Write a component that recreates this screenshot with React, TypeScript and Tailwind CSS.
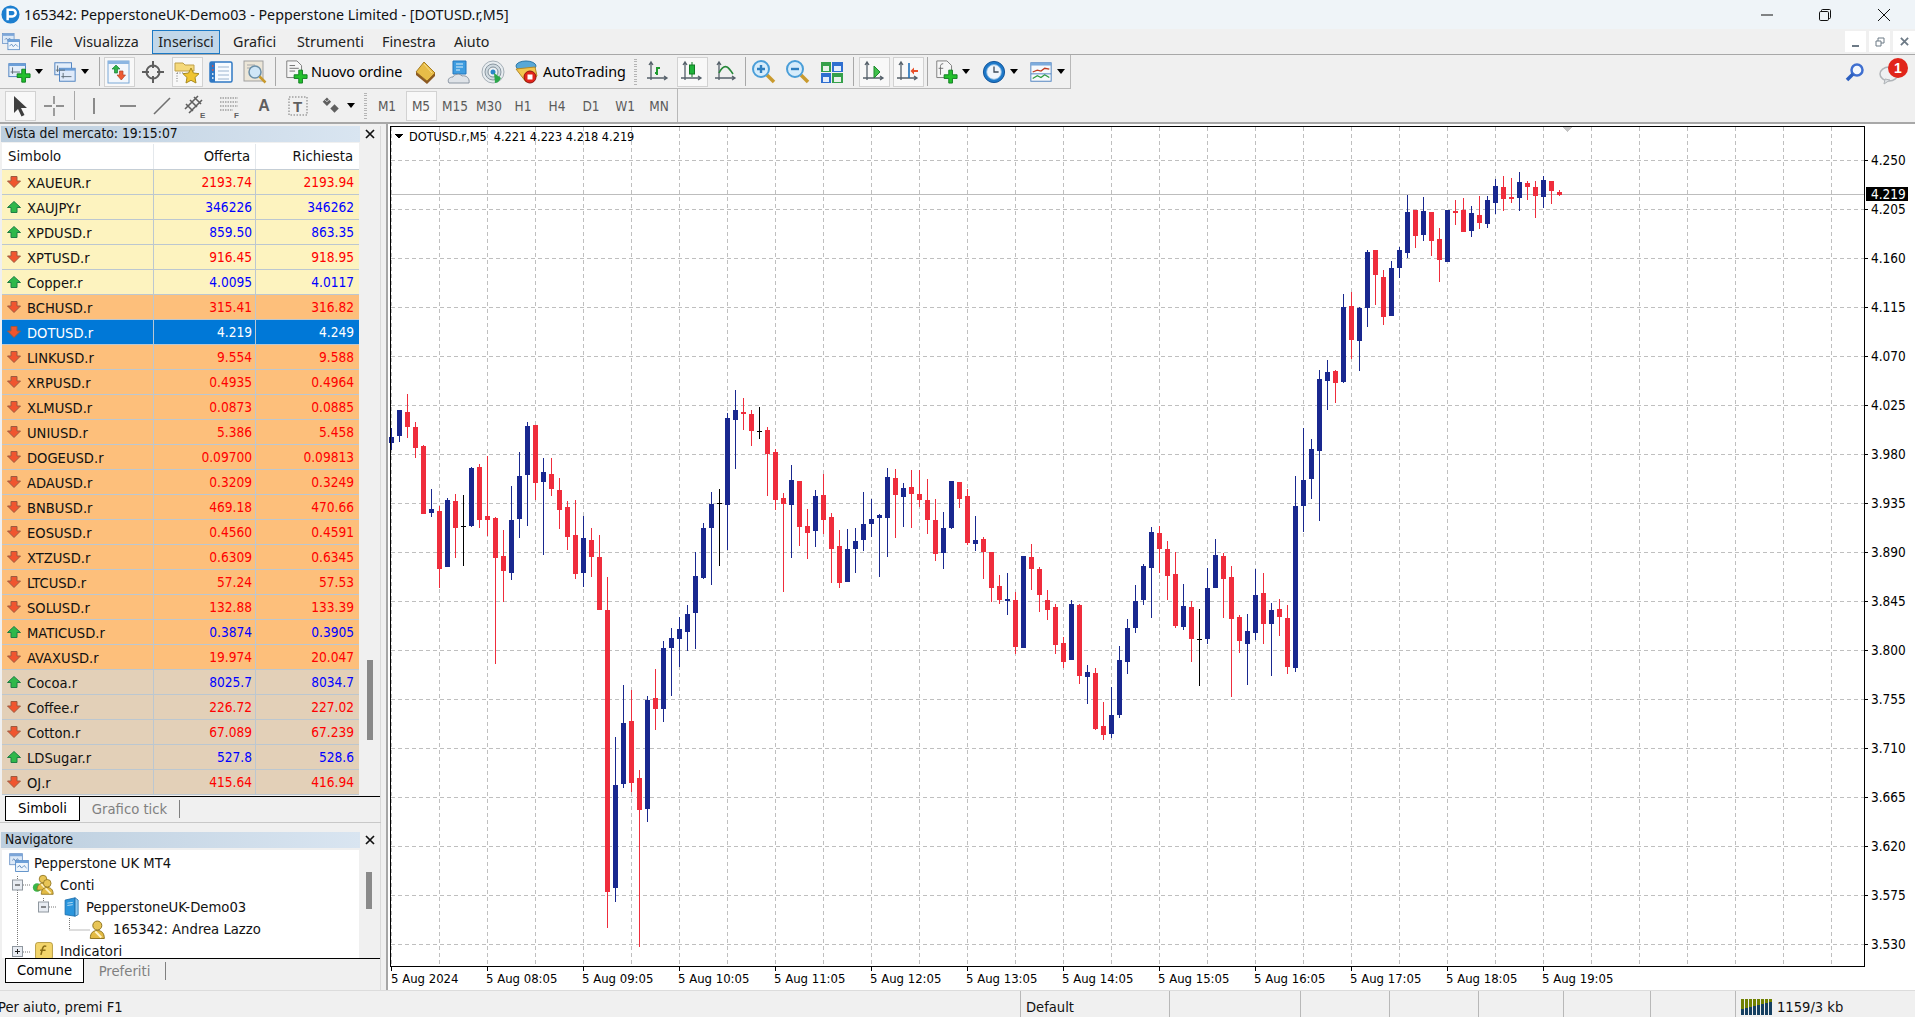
import type { ReactNode } from 'react';

const sans = "font-['DejaVu_Sans',sans-serif] [font-stretch:condensed]";
const ui = "font-['Noto_Sans',sans-serif]";

type Candle = [string, number, number, number, number];

// kind, high, body top, body bottom, low: read off the chart, scale 3, per block offset
const early: Candle[] = [
  ['b', 145, 170, 188, 210], ['b', 90, 90, 168, 186], ['r', 42, 96, 141, 174], ['r', 126, 141, 204, 234],
  ['r', 195, 198, 402, 402], ['b', 327, 387, 399, 411], ['r', 378, 393, 567, 624], ['b', 354, 360, 561, 561],
  ['r', 342, 363, 444, 534], ['k', 345, 439, 440, 558], ['b', 262, 264, 438, 441], ['r', 252, 261, 420, 444],
  ['r', 228, 408, 420, 468], ['r', 411, 414, 534, 852], ['r', 450, 528, 573, 666], ['b', 318, 420, 579, 600],
  ['b', 216, 288, 417, 474], ['b', 126, 138, 285, 438], ['r', 135, 135, 309, 360], ['b', 234, 276, 306, 525],
  ['r', 234, 282, 327, 348], ['r', 294, 330, 390, 447], ['r', 363, 381, 471, 510], ['r', 360, 465, 582, 597],
  ['b', 408, 474, 579, 621], ['r', 444, 480, 531, 591], ['r', 465, 531, 690, 690], ['r', 591, 690, 1536, 1644],
  ['b', 1071, 1215, 1524, 1566], ['b', 915, 1029, 1212, 1224], ['r', 930, 1023, 1209, 1236], ['r', 1170, 1194, 1290, 1700],
  ['b', 948, 960, 1287, 1326], ['r', 867, 954, 987, 1050], ['b', 783, 804, 987, 1026], ['b', 744, 774, 804, 948],
  ['b', 711, 747, 777, 861], ['b', 675, 702, 756, 813], ['b', 516, 588, 699, 807], ['b', 429, 444, 594, 597],
  ['b', 336, 372, 444, 615], ['k', 327, 370, 371, 558], ['b', 99, 114, 375, 510], ['b', 30, 90, 120, 267],
  ['r', 54, 96, 102, 150], ['r', 90, 102, 153, 198], ['k', 81, 154, 155, 177], ['r', 141, 150, 222, 348],
  ['r', 207, 216, 360, 390], ['r', 339, 354, 372, 636], ['b', 255, 300, 375, 534], ['r', 303, 303, 441, 498],
  ['r', 387, 438, 459, 537], ['b', 330, 348, 453, 501], ['r', 282, 345, 420, 462], ['r', 399, 411, 507, 609],
  ['r', 450, 498, 609, 624], ['b', 447, 507, 606, 606], ['b', 444, 483, 507, 579], ['b', 336, 432, 480, 513],
  ['b', 357, 417, 432, 471], ['b', 402, 405, 414, 591], ['b', 264, 291, 414, 531],
];

const middle: Candle[] = [
  ['r', 87, 114, 165, 294], ['b', 129, 144, 171, 261], ['r', 90, 141, 162, 264], ['r', 90, 162, 180, 201],
  ['r', 117, 180, 240, 282], ['r', 177, 240, 342, 363], ['b', 216, 264, 339, 387], ['b', 123, 123, 264, 267],
  ['r', 126, 126, 177, 204], ['r', 147, 168, 309, 315], ['b', 228, 300, 312, 333], ['r', 291, 297, 336, 417],
  ['r', 336, 336, 444, 486], ['r', 405, 438, 480, 492], ['b', 399, 477, 483, 525], ['r', 456, 480, 621, 642],
  ['b', 348, 348, 624, 624], ['r', 312, 351, 387, 450], ['r', 381, 387, 465, 516], ['r', 450, 480, 510, 540],
  ['r', 492, 501, 615, 642], ['r', 591, 609, 666, 684], ['b', 480, 492, 660, 660], ['r', 492, 495, 708, 732],
  ['b', 675, 696, 711, 792], ['r', 684, 699, 867, 870], ['r', 786, 858, 885, 900], ['b', 741, 825, 882, 894],
  ['b', 618, 660, 825, 834], ['b', 537, 564, 666, 702], ['b', 435, 483, 564, 579], ['b', 372, 378, 480, 495],
  ['b', 261, 276, 384, 534], ['r', 258, 279, 327, 399], ['r', 303, 327, 408, 480], ['r', 336, 402, 558, 564],
  ['b', 432, 498, 561, 570], ['r', 483, 501, 597, 666], ['k', 507, 597, 598, 738], ['b', 384, 444, 597, 612],
  ['b', 297, 345, 444, 444], ['r', 339, 348, 417, 534], ['r', 378, 411, 537, 771], ['r', 525, 531, 603, 639],
  ['b', 522, 573, 612, 735], ['b', 387, 465, 579, 600], ['r', 399, 459, 552, 612], ['b', 489, 510, 552, 708],
  ['r', 477, 507, 531, 588], ['r', 495, 534, 681, 702],
];

const late: Candle[] = [
  ['b', 948, 1038, 1524, 1536], ['b', 804, 960, 1038, 1116], ['b', 837, 867, 957, 1017], ['b', 630, 657, 873, 1083],
  ['b', 600, 636, 663, 750], ['r', 630, 633, 669, 729], ['b', 402, 441, 666, 669], ['r', 396, 438, 540, 597],
  ['b', 441, 444, 543, 633], ['b', 270, 276, 444, 501], ['r', 270, 270, 345, 435], ['r', 330, 351, 471, 495],
  ['b', 303, 324, 468, 468], ['b', 261, 270, 324, 354], ['b', 105, 156, 279, 294], ['r', 150, 150, 228, 264],
  ['b', 111, 153, 225, 243], ['r', 156, 156, 243, 288], ['r', 204, 237, 300, 366], ['b', 150, 150, 306, 306],
  ['r', 120, 153, 159, 195], ['r', 114, 150, 216, 216], ['b', 138, 159, 213, 231], ['r', 108, 165, 189, 207],
  ['b', 108, 120, 192, 204], ['b', 57, 78, 129, 162], ['r', 48, 81, 117, 153], ['r', 54, 111, 117, 129],
  ['b', 36, 66, 114, 153], ['r', 63, 69, 81, 120], ['r', 63, 81, 108, 174], ['b', 48, 60, 111, 144],
  ['r', 63, 63, 93, 132], ['r', 90, 96, 105, 108],
];

const candles = [
  ...early.map((c) => ({ c, off: 380 })),
  ...middle.map((c) => ({ c, off: 440 })),
  ...late.map((c) => ({ c, off: 160 })),
];

const candleColor: Record<string, string> = { b: '#19288f', r: '#ef2d3c', k: '#000000' };

type Quote = { symbol: string; bid: string; ask: string; up?: boolean; tone: 'y' | 'o' | 't'; selected?: boolean };

const quotes: Quote[] = [
  { symbol: 'XAUEUR.r', bid: '2193.74', ask: '2193.94', tone: 'y' },
  { symbol: 'XAUJPY.r', bid: '346226', ask: '346262', up: true, tone: 'y' },
  { symbol: 'XPDUSD.r', bid: '859.50', ask: '863.35', up: true, tone: 'y' },
  { symbol: 'XPTUSD.r', bid: '916.45', ask: '918.95', tone: 'y' },
  { symbol: 'Copper.r', bid: '4.0095', ask: '4.0117', up: true, tone: 'y' },
  { symbol: 'BCHUSD.r', bid: '315.41', ask: '316.82', tone: 'o' },
  { symbol: 'DOTUSD.r', bid: '4.219', ask: '4.249', tone: 'o', selected: true },
  { symbol: 'LINKUSD.r', bid: '9.554', ask: '9.588', tone: 'o' },
  { symbol: 'XRPUSD.r', bid: '0.4935', ask: '0.4964', tone: 'o' },
  { symbol: 'XLMUSD.r', bid: '0.0873', ask: '0.0885', tone: 'o' },
  { symbol: 'UNIUSD.r', bid: '5.386', ask: '5.458', tone: 'o' },
  { symbol: 'DOGEUSD.r', bid: '0.09700', ask: '0.09813', tone: 'o' },
  { symbol: 'ADAUSD.r', bid: '0.3209', ask: '0.3249', tone: 'o' },
  { symbol: 'BNBUSD.r', bid: '469.18', ask: '470.66', tone: 'o' },
  { symbol: 'EOSUSD.r', bid: '0.4560', ask: '0.4591', tone: 'o' },
  { symbol: 'XTZUSD.r', bid: '0.6309', ask: '0.6345', tone: 'o' },
  { symbol: 'LTCUSD.r', bid: '57.24', ask: '57.53', tone: 'o' },
  { symbol: 'SOLUSD.r', bid: '132.88', ask: '133.39', tone: 'o' },
  { symbol: 'MATICUSD.r', bid: '0.3874', ask: '0.3905', up: true, tone: 'o' },
  { symbol: 'AVAXUSD.r', bid: '19.974', ask: '20.047', tone: 'o' },
  { symbol: 'Cocoa.r', bid: '8025.7', ask: '8034.7', up: true, tone: 't' },
  { symbol: 'Coffee.r', bid: '226.72', ask: '227.02', tone: 't' },
  { symbol: 'Cotton.r', bid: '67.089', ask: '67.239', tone: 't' },
  { symbol: 'LDSugar.r', bid: '527.8', ask: '528.6', up: true, tone: 't' },
  { symbol: 'OJ.r', bid: '415.64', ask: '416.94', tone: 't' },
];

const toneClass = { y: 'bg-[#fdf3bf]', o: 'bg-[#fdbf7b]', t: 'bg-[#e3d0b8]' };

function Plus({ x = 12, y = 12 }: { x?: number; y?: number }) {
  return (
    <path
      transform={`translate(${x} ${y})`}
      d="M5 0h4v5h5v4H9v5H5V9H0V5h5z"
      fill="#23c02c"
      stroke="#0d7d1e"
      strokeWidth="1"
    />
  );
}

function Svg({ children, className = 'h-[26px] w-[26px]' }: { children: ReactNode; className?: string }) {
  return (
    <svg viewBox="0 0 26 26" className={className} fill="none">
      {children}
    </svg>
  );
}

function Axes() {
  return (
    <path d="M6 3v18M2 19h19M4 6l2-3 2 3M19 17l3 2-3 2" stroke="#55606a" strokeWidth="1.3" />
  );
}

function TerminalIcon({ className }: { className?: string }) {
  return (
    <Svg className={className}>
      <rect x="2" y="2" width="15" height="13" fill="#dce9f7" stroke="#6b93c6" />
      <rect x="2" y="2" width="15" height="3" fill="#7da6d8" />
      <path d="M5 10l2-2 2 3 2-3 2 2" stroke="#5a7fae" />
      <rect x="9" y="10" width="15" height="13" fill="#eef5fc" stroke="#4d84c2" />
      <rect x="9" y="10" width="15" height="3" fill="#6ea0d8" />
      <path d="M11 18l3-2 2 3 3-3 3 3" stroke="#4d7fb8" />
    </Svg>
  );
}

function UpDownIcon({ up }: { up?: boolean }) {
  return (
    <svg viewBox="0 0 14 12" className="h-[12px] w-[14px] shrink-0">
      {up ? (
        <path d="M7 .5l6.500 6H10v5H4v-5H.5z" fill="#2fb84a" stroke="#1f7d45" strokeWidth="1" />
      ) : (
        <path d="M4 .5h6V5h3.500L7 11.500 .5 5H4z" fill="#f0552f" stroke="#9c5a40" strokeWidth="1" />
      )}
    </svg>
  );
}

function Btn({ children, pressed, className = 'w-[34px]' }: { children: ReactNode; pressed?: boolean; className?: string }) {
  return (
    <div className={`flex h-full shrink-0 items-center justify-center py-[1px] ${className}`}>
      <div
        className={`flex h-[30px] w-[31px] items-center justify-center ${
          pressed ? 'border border-[#d2d2d2] bg-[#f8f8f8]' : ''
        }`}
      >
        {children}
      </div>
    </div>
  );
}

function DropBtn({ children, className }: { children: ReactNode; className: string }) {
  return (
    <div className={`flex h-full shrink-0 items-center ${className}`}>
      {children}
      <span className="ml-[4px] h-0 w-0 border-x-[4px] border-t-[5px] border-x-transparent border-t-black" />
    </div>
  );
}

function Sep({ className = 'w-[6px]' }: { className?: string }) {
  return (
    <div className={`flex h-full shrink-0 justify-center py-[2px] ${className}`}>
      <div className="h-full w-px bg-[#a8a8a8]" />
    </div>
  );
}

function Grip() {
  return (
    <div className="flex h-full w-[10px] shrink-0 flex-col justify-evenly py-[2px] pl-[3px]">
      {Array.from({ length: 11 }).map((_, i) => (
        <span key={i} className="h-px w-[3px] bg-[#b5b5b5]" />
      ))}
    </div>
  );
}

function TopToolbar() {
  return (
    <div className="flex h-[34px] w-[1071px] items-center border-r border-b border-[#b8b8b8] pl-[4px]">
      <DropBtn className="w-[45px] pl-[3px]">
        <Svg className="h-[24px] w-[24px]">
          <rect x="2" y="4" width="18" height="14" fill="#e4eefa" stroke="#4a7fbf" />
          <rect x="2" y="4" width="18" height="2.5" fill="#6c9fd8" />
          <path d="M6 8v7M4 13h10" stroke="#5d6a75" />
          <Plus x={11} y={10} />
        </Svg>
      </DropBtn>
      <DropBtn className="w-[47px] pl-[4px]">
        <Svg className="h-[24px] w-[24px]">
          <rect x="2" y="3" width="18" height="13" fill="#e4eefa" stroke="#4a7fbf" />
          <rect x="7" y="9" width="17" height="14" fill="#dfeafa" stroke="#4a7fbf" />
          <rect x="7" y="9" width="17" height="2.5" fill="#6c9fd8" />
          <path d="M5 6v7M3 11h10M11 14v6M9 18h11" stroke="#5d6a75" />
        </Svg>
      </DropBtn>
      <Sep />
      <Btn pressed>
        <Svg>
          <rect x="2" y="2" width="21" height="22" fill="#f3f7fc" stroke="#7ba8d6" />
          <rect x="2" y="2" width="21" height="3" fill="#8cb6e2" />
          <path d="M10 6l4 4h-2.5v4h-3v-4H6z" fill="#2fb548" stroke="#1c7d3b" strokeWidth=".7" />
          <path d="M13.5 12h3.5v4h2.5l-4.2 5-4.3-5h2.5z" fill="#ef5a33" stroke="#b2442a" strokeWidth=".7" />
        </Svg>
      </Btn>
      <Btn>
        <Svg>
          <circle cx="13" cy="13" r="6.5" stroke="#5e5e5e" strokeWidth="2" />
          <path d="M13 2v7M13 17v7M2 13h7M17 13h7" stroke="#5e5e5e" strokeWidth="2" />
        </Svg>
      </Btn>
      <Btn pressed>
        <Svg>
          <path d="M1 4h8l2 2h9v6H1z" fill="#f5d97b" stroke="#bfa04a" />
          <path d="M3 14v9M3 14h6" stroke="#777" strokeDasharray="1 1.5" />
          <path d="M17 9l2.4 5 5.6.7-4 3.8 1 5.5-5-2.7-5 2.7 1-5.5-4-3.8 5.6-.7z" fill="#f0c430" stroke="#a88a20" />
        </Svg>
      </Btn>
      <Btn>
        <Svg>
          <rect x="2" y="3" width="22" height="20" rx="1.5" fill="#f7fbff" stroke="#2f78c4" strokeWidth="1.5" />
          <rect x="2" y="3" width="5" height="20" fill="#2f78c4" />
          <path d="M10 8h11M10 12h11M10 16h11M10 20h11" stroke="#9bb4cf" />
          <path d="M4 7h1.5M4 11h1.5" stroke="#ef4a36" strokeWidth="1.5" />
          <path d="M4 15h1.5M4 19h1.5" stroke="#ffffff" strokeWidth="1.5" />
        </Svg>
      </Btn>
      <Btn>
        <Svg>
          <rect x="2" y="2" width="19" height="20" fill="#ece6d8" stroke="#9f9f9f" />
          <path d="M5 6h8M5 9h5" stroke="#a9a9a9" />
          <circle cx="13" cy="13" r="6" fill="#cfe6f7" stroke="#6a8fa8" strokeWidth="1.5" />
          <path d="M17.5 17.5l6 6" stroke="#c99a2e" strokeWidth="2.5" />
        </Svg>
      </Btn>
      <Sep />
      <div className="flex h-full w-[130px] shrink-0 items-center pl-[6px]">
        <Svg className="h-[24px] w-[24px]">
          <path d="M3 1h11l5 5v13H3z" fill="#f6f6f6" stroke="#7a7a7a" />
          <path d="M6 6h6M6 9h10M6 12h6" stroke="#6b6b6b" />
          <Plus x={11} y={11} />
        </Svg>
        <span className={`${ui} ml-[3px] text-[14.3px] text-black`}>Nuovo ordine</span>
      </div>
      <Btn>
        <Svg>
          <path d="M12 3l11 11-8 8L4 13z" fill="#e7bc48" stroke="#a67c1f" />
          <path d="M4 13v3l11 9 8-8v-3l-8 8z" fill="#8c5a22" />
          <path d="M12 5l8 9" stroke="#f7dc85" />
        </Svg>
      </Btn>
      <Btn>
        <Svg>
          <path d="M7 2h13v13H7z" fill="#3f9de0" stroke="#2476bd" />
          <path d="M10 5h7M10 8h7M10 11h4" stroke="#dff0fb" />
          <path d="M3 24c-2-3 0-6 4-6 1-3 7-4 9-1 4-1 8 2 7 7z" fill="#dfe3e8" stroke="#8b96a3" />
        </Svg>
      </Btn>
      <Btn>
        <Svg>
          <circle cx="13" cy="13" r="11" fill="#e8edf0" stroke="#a4aeb6" />
          <circle cx="13" cy="13" r="8" fill="#d0dae0" stroke="#8a97a1" />
          <circle cx="13" cy="13" r="5" fill="#eef2f4" stroke="#7f8e99" />
          <circle cx="13" cy="13" r="2.5" fill="#2a86c8" />
          <path d="M14 14l1 10c3 0 5-3 6-5z" fill="#2ca84a" />
        </Svg>
      </Btn>
      <div className="flex h-full w-[121px] shrink-0 items-center pl-[3px]">
        <Svg>
          <ellipse cx="13" cy="7" rx="10" ry="5" fill="#58a8d6" stroke="#2d78a8" />
          <path d="M3 10l10 13 11-6-2-9z" fill="#f2c64e" stroke="#b48a28" />
          <circle cx="17" cy="18" r="6" fill="#e2231a" stroke="#8d1510" />
          <rect x="14.5" y="15.5" width="5" height="5" fill="#ffffff" />
        </Svg>
        <span className={`${ui} ml-[4px] text-[14.3px] text-black`}>AutoTrading</span>
      </div>
      <Grip />
      <Btn>
        <Svg>
          <Axes />
          <path d="M12 8v8M12 14h-2M12 9h3" stroke="#1f9a2e" strokeWidth="2" />
        </Svg>
      </Btn>
      <Btn pressed>
        <Svg>
          <Axes />
          <path d="M13 3v15" stroke="#127a25" />
          <rect x="10.5" y="6" width="5" height="9" fill="#1fb33a" stroke="#127a25" />
        </Svg>
      </Btn>
      <Btn>
        <Svg>
          <Axes />
          <path d="M6 14c3-6 6-7 8-6s4 4 6 7" stroke="#27883a" strokeWidth="1.6" />
        </Svg>
      </Btn>
      <Sep className="w-[4px]" />
      <Btn>
        <Zoomer sign="+" />
      </Btn>
      <Btn>
        <Zoomer sign="-" />
      </Btn>
      <Btn>
        <Svg>
          <rect x="2" y="3" width="10" height="10" fill="#35a04a" />
          <rect x="13" y="3" width="11" height="10" fill="#2f6fd0" />
          <rect x="2" y="14" width="10" height="10" fill="#2f6fd0" />
          <rect x="13" y="14" width="11" height="10" fill="#35a04a" />
          <rect x="4" y="7" width="6" height="5" fill="#e8f2ea" />
          <rect x="15" y="7" width="7" height="5" fill="#e4edfb" />
          <rect x="4" y="18" width="6" height="5" fill="#e4edfb" />
          <rect x="15" y="18" width="7" height="5" fill="#e8f2ea" />
        </Svg>
      </Btn>
      <Sep className="w-[8px]" />
      <Btn pressed>
        <Svg>
          <Axes />
          <path d="M13 7l6 6-6 6z" fill="#3fc04a" stroke="#1f8a2e" />
        </Svg>
      </Btn>
      <Btn pressed>
        <Svg>
          <Axes />
          <path d="M14 4v15" stroke="#1d6fb8" strokeWidth="1.6" />
          <path d="M23 11h-4v-2.5L15.5 12l3.5 3.5V13h4z" fill="#e8502a" />
        </Svg>
      </Btn>
      <Sep className="w-[4px]" />
      <DropBtn className="w-[47px] pl-[5px]">
        <Svg className="h-[24px] w-[24px]">
          <path d="M3 1h11l5 5v13H3z" fill="#f6f6f6" stroke="#7a7a7a" />
          <path d="M10 4c-2 0-3 1-3 3v9M5 9h5" stroke="#6b6b6b" />
          <Plus x={11} y={11} />
        </Svg>
      </DropBtn>
      <DropBtn className="w-[47px] pl-[6px]">
        <Svg className="h-[24px] w-[24px]">
          <circle cx="13" cy="13" r="11.5" fill="#1d78c8" stroke="#0d4f96" />
          <circle cx="13" cy="13" r="8" fill="#eff5fb" stroke="#7cb2e0" />
          <path d="M13 7v6h5" stroke="#3d4a58" strokeWidth="1.4" />
        </Svg>
      </DropBtn>
      <DropBtn className="w-[46px] pl-[6px]">
        <Svg className="h-[24px] w-[24px]">
          <rect x="2" y="3" width="22" height="20" fill="#f6f9fc" stroke="#4a7fbf" />
          <rect x="2" y="3" width="22" height="3" fill="#7cabdc" />
          <path d="M4 13l5-2 4 1 4-3 5 1" stroke="#c0391f" strokeWidth="1.4" />
          <path d="M4 20l5-3 4 2 4-3 5 3" stroke="#2d9c3f" strokeWidth="1.4" />
          <path d="M2 15h22" stroke="#4a7fbf" />
        </Svg>
      </DropBtn>
    </div>
  );
}

function Zoomer({ sign }: { sign: '+' | '-' }) {
  return (
    <Svg>
      <path d="M16 16l7 7" stroke="#c99a2e" strokeWidth="3.5" />
      <circle cx="10" cy="10" r="8" fill="#d6ecfb" stroke="#4a9ed8" strokeWidth="2" />
      <path d={sign === '+' ? 'M6 10h8M10 6v8' : 'M6 10h8'} stroke="#2f7fbf" strokeWidth="2.4" />
    </Svg>
  );
}

function TextGlyph({ children }: { children: string }) {
  return <span className={`${sans} pt-[2px] text-[13.5px] text-[#5a5a5a]`}>{children}</span>;
}

function SecondToolbar() {
  return (
    <div className="flex h-[33px] w-[678px] items-center border-r border-[#b8b8b8] pl-[3px]">
      <Btn pressed>
        <Svg>
          <path d="M7 3l13 12h-6l3.5 7-3 1.5L11 16l-4 4z" fill="#3f3f3f" />
        </Svg>
      </Btn>
      <Btn>
        <Svg>
          <path d="M13 3v8M13 15v8M3 13h8M15 13h8" stroke="#707070" strokeWidth="1.3" />
        </Svg>
      </Btn>
      <Sep className="w-[6px]" />
      <Btn>
        <Svg>
          <path d="M13 5v16" stroke="#707070" strokeWidth="1.6" />
        </Svg>
      </Btn>
      <Btn>
        <Svg>
          <path d="M5 13h16" stroke="#707070" strokeWidth="1.6" />
        </Svg>
      </Btn>
      <Btn>
        <Svg>
          <path d="M5 21L21 5" stroke="#707070" strokeWidth="1.6" />
        </Svg>
      </Btn>
      <Btn>
        <Svg>
          <path d="M2 16L15 3M6 20L19 7M3 11l7 7M7 7l7 7M11 4l7 7" stroke="#5f5f5f" strokeWidth="1.6" />
          <text x="17" y="25" fontSize="8" fontWeight="700" fill="#5f5f5f" fontFamily="Liberation Sans">E</text>
        </Svg>
      </Btn>
      <Btn>
        <Svg>
          <path d="M3 5h18M3 9h18M3 13h18M3 17h13" stroke="#777" strokeDasharray="1.5 1" />
          <text x="17" y="25" fontSize="8" fontWeight="700" fill="#5f5f5f" fontFamily="Liberation Sans">F</text>
        </Svg>
      </Btn>
      <Btn>
        <span className="font-['Liberation_Sans',sans-serif] text-[16px] font-bold text-[#5f5f5f]">A</span>
      </Btn>
      <Btn>
        <Svg>
          <rect x="4" y="4" width="18" height="18" stroke="#777" strokeDasharray="1.5 1.5" />
          <text x="8" y="19" fontSize="15" fontWeight="700" fill="#5f5f5f" fontFamily="Liberation Sans">T</text>
        </Svg>
      </Btn>
      <DropBtn className="w-[46px] pl-[6px]">
        <Svg className="h-[22px] w-[22px]">
          <path d="M7 3l5 5-5 5-5-5z" fill="#5f5f5f" />
          <path d="M16 11l5 5-5 5-5-5z" fill="#5f5f5f" />
          <path d="M5 6l2 2 4-4" stroke="#eee" />
        </Svg>
      </DropBtn>
      <Grip />
      <div className="-ml-[1px] flex h-full items-center">
        {['M1', 'M5', 'M15', 'M30', 'H1', 'H4', 'D1', 'W1', 'MN'].map((period) => (
          <Btn key={period} pressed={period === 'M5'}>
            <TextGlyph>{period}</TextGlyph>
          </Btn>
        ))}
      </div>
    </div>
  );
}

function CloseMark() {
  return (
    <svg viewBox="0 0 10 10" className="h-[10px] w-[10px]">
      <path d="M1 1l8 8M9 1l-8 8" stroke="#111" strokeWidth="1.7" />
    </svg>
  );
}

function PanelTitle({ title }: { title: string }) {
  return (
    <div className="flex h-[16px] items-center pl-[1px]">
      <div
        className={`${sans} flex h-full w-[361px] items-center bg-gradient-to-r from-[#bccede] to-[#d9e5f1] pl-[4px] text-[13.8px] leading-none text-[#111]`}
      >
        {title}
      </div>
      <div className="flex w-[20px] justify-center">
        <CloseMark />
      </div>
    </div>
  );
}

function Tabs({ active, other, activeWidth, otherWidth }: { active: string; other: string; activeWidth: string; otherWidth: string }) {
  return (
    <div className={`${sans} ml-[5px] flex h-[25px] w-[375px] border-t border-black text-[14.7px]`}>
      <div className={`flex h-[24px] items-center justify-center border-x border-b border-black bg-white text-black ${activeWidth}`}>
        {active}
      </div>
      <div className={`my-[3px] flex items-center justify-center border-r border-[#808080] text-[#808080] ${otherWidth}`}>
        {other}
      </div>
    </div>
  );
}

function MarketWatch() {
  return (
    <div className="flex flex-col">
      <PanelTitle title="Vista del mercato: 19:15:07" />
      <div className={`${sans} mt-px flex text-[13.6px]`}>
        <div className="ml-[2px] w-[357px]">
          <div className="grid h-[27px] grid-cols-[152px_102px_103px] border-b border-[#c5ced6] bg-white pt-[1px] text-[14.7px] text-[#111]">
            <div className="flex items-center border-r border-[#e4e8ec] pl-[6px]">Simbolo</div>
            <div className="flex items-center justify-end border-r border-[#e4e8ec] pr-[5px]">Offerta</div>
            <div className="flex items-center justify-end pr-[6px]">Richiesta</div>
          </div>
          {quotes.map((quote) => {
            const priceColor = quote.selected ? 'text-white' : quote.up ? 'text-[#0000ff]' : 'text-[#ff0000]';
            return (
              <div
                key={quote.symbol}
                className={`grid h-[25px] grid-cols-[152px_102px_103px] border-b border-[#bcc7d0] ${
                  quote.selected ? 'bg-[#0078d7]' : toneClass[quote.tone]
                }`}
              >
                <div
                  className={`flex items-center gap-[6px] border-r border-[#bcc7d0] pl-[5px] text-[14.6px] ${
                    quote.selected ? 'text-white' : 'text-[#111]'
                  }`}
                >
                  <UpDownIcon up={quote.up} />
                  <span className="pt-[1px]">{quote.symbol}</span>
                </div>
                <div className={`flex items-center justify-end border-r border-[#bcc7d0] pt-[1px] pr-[3px] ${priceColor}`}>
                  {quote.bid}
                </div>
                <div className={`flex items-center justify-end pt-[1px] pr-[5px] ${priceColor}`}>{quote.ask}</div>
              </div>
            );
          })}
        </div>
        <div className="w-[22px] pl-[8px]">
          <div className="mt-[517px] h-[80px] w-[6px] bg-[#8a8a8a]" />
        </div>
      </div>
      <div className="mt-px">
        <Tabs active="Simboli" other="Grafico tick" activeWidth="w-[75px]" otherWidth="w-[100px]" />
      </div>
    </div>
  );
}

function TreeRow({ icon, label, indent, gap }: { icon: ReactNode; label: string; indent: string; gap: string }) {
  return (
    <div className={`flex h-[22px] items-center ${indent}`}>
      <span className={gap}>{icon}</span>
      <span className="whitespace-nowrap text-[#111]">{label}</span>
    </div>
  );
}

function Person({ x, y, scale = 1 }: { x: number; y: number; scale?: number }) {
  return (
    <g transform={`translate(${x} ${y}) scale(${scale})`}>
      <circle cx="8" cy="5" r="4.5" fill="#e8c556" stroke="#8f7420" />
      <path d="M1 18c0-6 3-8 7-8s7 2 7 8z" fill="#e3bb45" stroke="#8f7420" />
      <path d="M6 11l6 6" stroke="#fff4c8" strokeWidth="2" />
    </g>
  );
}

function TreeLines() {
  return (
    <svg className="pointer-events-none absolute top-0 left-0 h-[108px] w-[120px]" viewBox="0 0 120 108" fill="none">
      <path d="M15.5 26v82M41.5 48v12M67.5 68v12H88M21 35h8M47 57h8M21 102h8" stroke="#777" strokeDasharray="1 1" />
      <rect x="10.5" y="30" width="10" height="10" fill="#e8ecf2" stroke="#8f979f" />
      <path d="M13 35h5" stroke="#222" />
      <rect x="36.5" y="52" width="10" height="10" fill="#e8ecf2" stroke="#8f979f" />
      <path d="M39 57h5" stroke="#222" />
      <rect x="10.5" y="96.500" width="10" height="10" fill="#e8ecf2" stroke="#8f979f" />
      <path d="M13 101.500h5M15.500 99v5" stroke="#222" />
    </svg>
  );
}

function Navigator() {
  return (
    <div className="mt-[9px] flex flex-col">
      <PanelTitle title="Navigatore" />
      <div className={`${sans} relative mt-[2px] flex h-[108px] overflow-hidden text-[14.7px]`}>
        <div className="relative ml-[2px] w-[358px] bg-white pt-[2px]">
          <TreeLines />
          <div className="relative">
            <TreeRow
              indent="pl-[6px]"
              gap="mr-[4px]"
              label="Pepperstone UK MT4"
              icon={<TerminalIcon className="h-[22px] w-[22px]" />}
            />
            <TreeRow
              indent="pl-[30px]"
              gap="mr-[6px]"
              label="Conti"
              icon={
                <Svg className="h-[22px] w-[22px]">
                  <circle cx="6" cy="16" r="5" fill="#3cb54a" />
                  <Person x={5} y={1} />
                  <Person x={10} y={6} />
                </Svg>
              }
            />
            <TreeRow
              indent="pl-[60px]"
              gap="mr-[4px]"
              label="PepperstoneUK-Demo03"
              icon={
                <Svg className="h-[20px] w-[20px]">
                  <path d="M4 4l13-3v24l-13-2z" fill="#2a95dc" stroke="#1a6aa8" />
                  <path d="M17 1l4 3v19l-4 2z" fill="#8cc8ef" stroke="#1a6aa8" />
                  <path d="M7 8l7-1M7 11l7-1" stroke="#d8eefb" />
                </Svg>
              }
            />
            <TreeRow
              indent="pl-[85px]"
              gap="mr-[6px]"
              label="165342: Andrea Lazzo"
              icon={
                <Svg className="h-[20px] w-[20px]">
                  <Person x={3} y={2} scale={1.3} />
                </Svg>
              }
            />
            <TreeRow
              indent="pl-[32px]"
              gap="mr-[6px]"
              label="Indicatori"
              icon={
                <Svg className="h-[20px] w-[20px]">
                  <rect x="2" y="2" width="22" height="22" rx="3" fill="#f3d56b" stroke="#a88a2a" />
                  <path d="M16 7c-3-1-4 0-5 3l-2 8M8 12h7" stroke="#8a6d16" strokeWidth="2" />
                </Svg>
              }
            />
          </div>
        </div>
        <div className="w-[21px] pl-[7px]">
          <div className="mt-[22px] h-[37px] w-[6px] bg-[#8a8a8a]" />
        </div>
      </div>
      <Tabs active="Comune" other="Preferiti" activeWidth="w-[79px]" otherWidth="w-[82px]" />
    </div>
  );
}

function LeftPanel() {
  return (
    <div className="flex h-full w-[388px] shrink-0 border-r-2 border-[#a6a6a6] pt-[2px]">
      <div className="h-full w-[381px] border-r border-[#dadada]">
        <MarketWatch />
        <div className="h-[2px] w-[381px] border-b border-[#c8c8c8]" />
        <Navigator />
      </div>
    </div>
  );
}

function Chart() {
  const priceLines = Array.from({ length: 17 }, (_, i) => ({
    y: 160 + 49 * i,
    label: (4.25 - 0.045 * i).toFixed(3),
  }));
  const gridX = Array.from({ length: 31 }, (_, i) => 391 + 48 * i);
  const timeLabels = ['5 Aug 2024', '5 Aug 08:05', '5 Aug 09:05', '5 Aug 10:05', '5 Aug 11:05', '5 Aug 12:05', '5 Aug 13:05', '5 Aug 14:05', '5 Aug 15:05', '5 Aug 16:05', '5 Aug 17:05', '5 Aug 18:05', '5 Aug 19:05'];
  const labelFont = { fontFamily: 'DejaVu Sans', fontStretch: 'condensed' };

  return (
    <div className="min-w-0 flex-1 bg-white">
      <svg viewBox="388 124 1527 866" className="block h-[866px] w-[1527px]" shapeRendering="crispEdges">
        {gridX.map((x) => (
          <path key={x} d={`M${x + 0.5} 127V966`} stroke="#bfbfbf" strokeDasharray="4 3" />
        ))}
        {priceLines.map(({ y }) => (
          <path key={y} d={`M391 ${y + 0.5}H1864`} stroke="#bfbfbf" strokeDasharray="4 3" />
        ))}
        <path d="M391 194.500H1864" stroke="#bdbdbd" />
        {candles.map(({ c: [kind, high, top, bottom, low], off }, k) => {
          const wickX = 391 + 8 * k;
          const yOf = (z: number) => off + z / 3;
          const color = candleColor[kind];
          return (
            <g key={k} fill={color}>
              <rect x={wickX} y={yOf(high)} width={1} height={Math.max(1, yOf(low) - yOf(high))} />
              <rect
                x={wickX - 2}
                y={yOf(top)}
                width={5}
                height={Math.max(1, yOf(bottom) - yOf(top))}
              />
            </g>
          );
        })}
        <path d="M1562 127h10l-5 5z" fill="#c4c4c4" />
        <path d="M390.500 126V966.500H1864.500V126.500H390.500" stroke="#000" strokeWidth="1.500" fill="none" />
        <path d="M395 134h8l-4 5z" fill="#000" />
        <text x={409} y={141} fontSize="12.600" fill="#000" style={labelFont} shapeRendering="auto">
          DOTUSD.r,M5&nbsp;&nbsp;4.221 4.223 4.218 4.219
        </text>
        {priceLines.map(({ y, label }) => (
          <g key={label}>
            <path d={`M1864 ${y + 0.5}h4`} stroke="#000" />
            <text x={1871} y={y + 5} fontSize="13.500" fill="#000" style={labelFont} shapeRendering="auto">
              {label}
            </text>
          </g>
        ))}
        <rect x={1866} y={187} width={42} height={14} fill="#000" />
        <text x={1871} y={199} fontSize="13.500" fill="#fff" style={labelFont} shapeRendering="auto">
          4.219
        </text>
        {timeLabels.map((label, i) => (
          <g key={label}>
            <path d={`M${i === 0 ? 391 : 391 + 96 * i}.5 966v5`} stroke="#000" />
            <text x={i === 0 ? 391 : 390 + 96 * i} y={983} fontSize="13" fill="#000" style={labelFont} shapeRendering="auto">
              {label}
            </text>
          </g>
        ))}
      </svg>
    </div>
  );
}

function StatusBar() {
  const cells = ['w-[149px]', 'w-[131px]', 'w-[89px]', 'w-[89px]', 'w-[85px]', 'w-[87px]', 'w-[85px]'];
  return (
    <div className={`${sans} flex h-[27px] border-t border-[#dcdcdc] bg-[#f0f0f0] text-[14.600px] text-[#111]`}>
      <div className="flex w-[1020px] shrink-0 items-center overflow-hidden">
        <span className="-ml-[2px] pt-[6px]">Per aiuto, premi F1</span>
      </div>
      {cells.map((width, i) => (
        <div key={width + i} className={`flex shrink-0 items-center border-l border-[#b8b8b8] pl-[5px] pt-[6px] ${width}`}>
          {i === 0 ? 'Default' : ''}
        </div>
      ))}
      <div className="flex flex-1 items-center gap-[5px] border-l border-[#b8b8b8] pl-[5px] pt-[6px]">
        <div className="flex h-[16px] w-[31px] items-stretch gap-px">
          {[10, 9, 8, 7, 6, 5, 4, 3].map((olive) => (
            <div key={olive} className="flex w-[3px] flex-col">
              <div className="bg-[#6f8000]" style={{ height: olive }} />
              <div className="flex-1 bg-[#164061]" />
            </div>
          ))}
        </div>
        <span>1159/3 kb</span>
      </div>
    </div>
  );
}

function TitleBar() {
  return (
    <div className="flex h-[29px] items-center bg-[#eff4f8]">
      <svg viewBox="0 0 20 20" className="ml-[1px] h-[19px] w-[19px]">
        <circle cx="10" cy="10" r="9.500" fill="#1c7fd0" />
        <path d="M7 16V5h5a3.500 3.500 0 010 7H7" stroke="#fff" strokeWidth="2.600" fill="none" />
      </svg>
      <span className={`${ui} ml-[4px] text-[14.250px] text-[#111]`}>
        165342: PepperstoneUK-Demo03 - Pepperstone Limited - [DOTUSD.r,M5]
      </span>
      <div className="ml-auto flex items-center pr-[25px]">
        <svg viewBox="0 0 12 12" className="mr-[46px] h-[12px] w-[12px]">
          <path d="M0 6h12" stroke="#111" strokeWidth="1" />
        </svg>
        <svg viewBox="0 0 12 12" className="mr-[47px] h-[12px] w-[12px]">
          <rect x=".5" y="2.500" width="9" height="9" rx="1.200" fill="none" stroke="#111" />
          <path d="M2.500 2.500V1.500a1 1 0 011-1h7a1 1 0 011 1v7a1 1 0 01-1 1h-1" fill="none" stroke="#111" />
        </svg>
        <svg viewBox="0 0 12 12" className="h-[12px] w-[12px]">
          <path d="M0 0l12 12M12 0L0 12" stroke="#111" strokeWidth="1" />
        </svg>
      </div>
    </div>
  );
}

function MenuBar() {
  const items = [
    { label: 'File', className: 'ml-[9px] w-[44px]' },
    { label: 'Visualizza', className: 'w-[78px]' },
    { label: 'Inserisci', className: 'w-[68px] bg-[#c1d7e9] border border-[#1b79c5] justify-center', },
    { label: 'Grafici', className: 'ml-[13px] w-[64px]' },
    { label: 'Strumenti', className: 'w-[85px]' },
    { label: 'Finestra', className: 'w-[72px]' },
    { label: 'Aiuto', className: 'w-[50px]' },
  ];
  return (
    <div className="flex h-[25px] items-center bg-[#f0f0f0]">
      <div className="ml-[1px] h-[20px] w-[20px]">
        <TerminalIcon className="h-[20px] w-[20px]" />
      </div>
      {items.map(({ label, className }) => (
        <div key={label} className={`${ui} flex h-[24px] items-center text-[14.300px] text-[#222] ${className}`}>
          {label}
        </div>
      ))}
      <div className="ml-auto flex gap-[3px]">
        <div className="flex h-[21px] w-[21px] items-end justify-center bg-white pb-[5px]">
          <div className="h-[2px] w-[7px] bg-[#6d7a86]" />
        </div>
        <div className="flex h-[21px] w-[21px] items-center justify-center bg-white">
          <svg viewBox="0 0 10 10" className="h-[10px] w-[10px]">
            <path d="M1 4h5v5H1zM3 4V1h6v5H6" fill="none" stroke="#6d7a86" />
          </svg>
        </div>
        <div className="flex h-[21px] w-[22px] items-center justify-center bg-white">
          <svg viewBox="0 0 10 10" className="h-[9px] w-[9px]">
            <path d="M1 1l8 8M9 1l-8 8" stroke="#6d7a86" strokeWidth="2" />
          </svg>
        </div>
      </div>
    </div>
  );
}

function ToolbarEnd() {
  return (
    <div className="ml-auto flex items-center pr-[6px]">
      <svg viewBox="0 0 20 20" className="mr-[12px] h-[20px] w-[20px]">
        <circle cx="12" cy="8" r="5.500" fill="#f4f8fd" stroke="#3f6fd0" strokeWidth="2.500" />
        <path d="M8 12l-6 6" stroke="#2c5fc0" strokeWidth="3.500" />
      </svg>
      <div className="relative h-[28px] w-[32px]">
        <svg viewBox="0 0 32 28" className="h-[28px] w-[32px]">
          <ellipse cx="12" cy="16" rx="9" ry="7" fill="#eef0f2" stroke="#b0b4b8" strokeWidth="1.500" />
          <path d="M8 21l-1 5 6-4z" fill="#dcdfe2" stroke="#b0b4b8" />
        </svg>
        <div className="absolute top-[0px] right-[1px] flex h-[20px] w-[20px] items-center justify-center rounded-full bg-[#e1251b] font-['Liberation_Sans',sans-serif] text-[14px] font-bold text-white">
          1
        </div>
      </div>
    </div>
  );
}

export default function App() {
  return (
    <div className="flex h-[1017px] w-[1915px] flex-col overflow-hidden bg-[#f0f0f0]">
      <TitleBar />
      <MenuBar />
      <div className="h-px bg-[#a8a8a8]" />
      <div className="flex">
        <TopToolbar />
        <ToolbarEnd />
      </div>
      <SecondToolbar />
      <div className="h-[2px] bg-[#a8a8a8]" />
      <div className="flex h-[866px]">
        <LeftPanel />
        <Chart />
      </div>
      <StatusBar />
    </div>
  );
}
